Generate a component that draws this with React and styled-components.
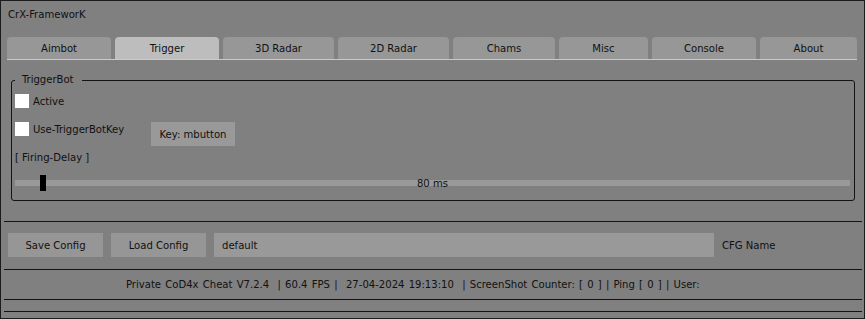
import React from 'react';
import styled, { createGlobalStyle } from 'styled-components';

const tabs = [
  { label: 'Aimbot', width: 104 },
  { label: 'Trigger', width: 104 },
  { label: '3D Radar', width: 111 },
  { label: '2D Radar', width: 111 },
  { label: 'Chams', width: 102 },
  { label: 'Misc', width: 89 },
  { label: 'Console', width: 104 },
  { label: 'About', width: 97 },
];

const GlobalStyle = createGlobalStyle`
  html, body {
    margin: 0;
    padding: 0;
    background: #808080;
  }
  body {
    font-family: 'DejaVu Sans Condensed', 'DejaVu Sans', sans-serif;
    font-stretch: condensed;
    font-size: 11.2px;
    color: #111;
  }
`;

const Window = styled.div`
  box-sizing: border-box;
  width: 865px;
  height: 319px;
  border: 1px solid #1c1c1c;
  background: #808080;
  display: flex;
  flex-direction: column;
`;

const Title = styled.div`
  height: 36px;
  padding: 7px 0 0 7px;
  box-sizing: border-box;
  line-height: 13px;
`;

const TabBar = styled.div`
  display: flex;
  gap: 4px;
  width: 850px;
  margin-left: 6px;
  border-bottom: 1px solid #c9c9c9;
`;

const Tab = styled.div`
  width: ${p => p.$w}px;
  height: 22px;
  border-radius: 4px 4px 0 0;
  background: ${p => (p.$active ? '#bdbdbd' : '#979797')};
  display: flex;
  align-items: center;
  justify-content: center;
`;

const Group = styled.fieldset`
  margin: 13px 0 0 10px;
  width: 844px;
  box-sizing: border-box;
  border: 1px solid #141414;
  border-radius: 3px;
  padding: 7px 3px 9px 3px;
  display: flex;
  flex-direction: column;
`;

const Legend = styled.legend`
  padding: 0 8px 0 7px;
  line-height: 14px;
`;

const Row = styled.div`
  display: flex;
  align-items: flex-start;
  margin-top: ${p => p.$mt || 0}px;
`;

const Check = styled.label`
  display: flex;
  align-items: center;
  gap: 4px;
  height: 14px;
  width: 136px;
`;

const Box = styled.span`
  width: 14px;
  height: 14px;
  background: #fff;
  flex: none;
`;

const KeyButton = styled.div`
  width: 84px;
  height: 24px;
  background: #999;
  display: flex;
  align-items: center;
  justify-content: center;
`;

const Caption = styled.div`
  line-height: 14px;
  margin-top: 5px;
`;

const Slider = styled.div`
  position: relative;
  margin-top: 10px;
  width: 835px;
  height: 16px;
  display: flex;
  align-items: center;
  justify-content: center;
  background: linear-gradient(#999, #999) center / 100% 6px no-repeat;
`;

const Thumb = styled.span`
  position: absolute;
  top: 0;
  width: 6px;
  height: 16px;
  background: #000;
`;

const Sep = styled.div`
  height: 1px;
  background: #141414;
  margin: ${p => p.$mt || 0}px 2px 0 3px;
`;

const ConfigRow = styled.div`
  display: flex;
  align-items: center;
  gap: 8px;
  margin: 11px 0 0 7px;
`;

const Btn = styled.div`
  width: 95px;
  height: 24px;
  background: #969696;
  display: flex;
  align-items: center;
  justify-content: center;
`;

const Input = styled.div`
  width: 500px;
  height: 24px;
  background: #999;
  display: flex;
  align-items: center;
  box-sizing: border-box;
  padding-left: 8px;
`;

const Status = styled.div`
  height: 29px;
  padding-left: 125px;
  display: flex;
  align-items: center;
  white-space: pre;
  word-spacing: 1px;
`;

export default function App() {
  const delay = 80;
  return (
    <>
      <GlobalStyle />
      <Window>
        <Title>CrX-FrameworK</Title>
        <TabBar>
          {tabs.map(t => (
            <Tab key={t.label} $w={t.width} $active={t.label === 'Trigger'}>{t.label}</Tab>
          ))}
        </TabBar>
        <Group>
          <Legend>TriggerBot</Legend>
          <Row>
            <Check><Box />Active</Check>
          </Row>
          <Row $mt={14}>
            <Check><Box />Use-TriggerBotKey</Check>
            <KeyButton>Key: mbutton</KeyButton>
          </Row>
          <Caption>[ Firing-Delay ]</Caption>
          <Slider>
            <Thumb style={{ left: Math.round(delay * 0.31) }} />
            {delay} ms
          </Slider>
        </Group>
        <Sep $mt={20} />
        <ConfigRow>
          <Btn>Save Config</Btn>
          <Btn>Load Config</Btn>
          <Input>default</Input>
          <span>CFG Name</span>
        </ConfigRow>
        <Sep $mt={12} />
        <Status>{'Private CoD4x Cheat V7.2.4  | 60.4 FPS |  27-04-2024 19:13:10  | ScreenShot Counter: [ 0 ] | Ping [ 0 ] | User:'}</Status>
        <Sep />
        <Sep $mt={11} />
      </Window>
    </>
  );
}
